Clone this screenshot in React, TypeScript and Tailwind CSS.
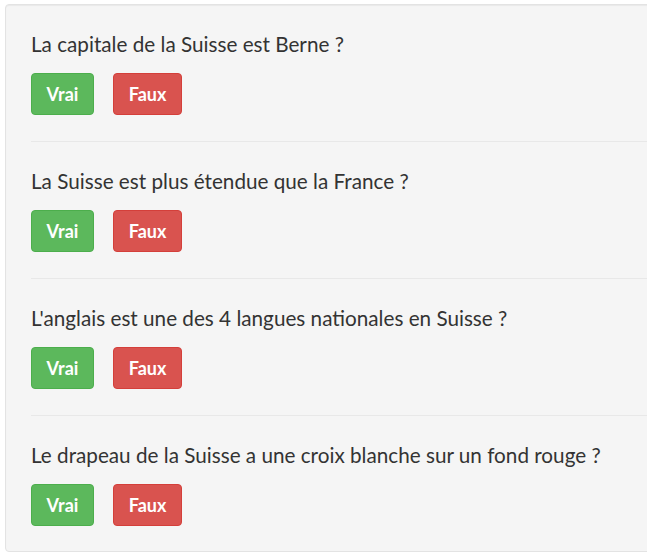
import React from "react";

const questions = [
  "La capitale de la Suisse est Berne ?",
  "La Suisse est plus étendue que la France ?",
  "L'anglais est une des 4 langues nationales en Suisse ?",
  "Le drapeau de la Suisse a une croix blanche sur un fond rouge ?",
];

export default function App() {
  return (
    <div className="w-full h-[557px] overflow-hidden bg-white" style={{ fontFamily: "Lato, 'Noto Sans', sans-serif" }}>
      <div className="ml-[5px] mt-[4px] w-[720px] bg-[#f5f5f5] border border-[#e3e3e3] rounded-[4px] shadow-[inset_0_1px_1px_rgba(0,0,0,0.05)] pl-[25px] pt-[26px] pb-[25px]">
        {questions.map((q, i) => (
          <div key={i}>
            {i > 0 && <div className="border-t border-[#e8e8e8] mt-[26px] mb-[26px]" />}
            <p className="text-[20.7px] leading-[26px] text-[#333] whitespace-nowrap">{q}</p>
            <div className="flex gap-[19px] mt-[16px]">
              <button className="h-[42px] w-[63px] rounded-[4px] bg-[#5cb85c] border border-[#4cae4c] text-white font-bold text-[18px] leading-none">Vrai</button>
              <button className="h-[42px] w-[69px] rounded-[4px] bg-[#d9534f] border border-[#d43f3a] text-white font-bold text-[18px] leading-none">Faux</button>
            </div>
          </div>
        ))}
      </div>
    </div>
  );
}
